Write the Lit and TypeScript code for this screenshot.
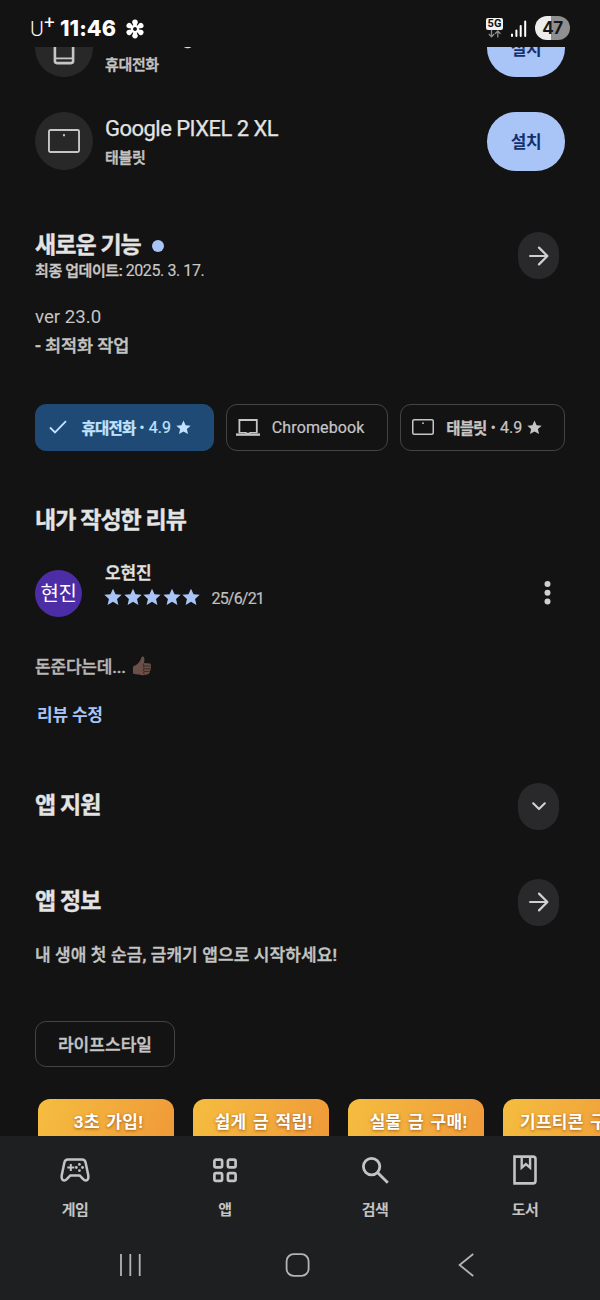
import { LitElement, html, css, svg } from "lit";
import { customElement } from "lit/decorators.js";

const STAR = "M10 0.8 L12.8 7 L19.6 7.6 L14.5 12.1 L16 18.8 L10 15.3 L4 18.8 L5.5 12.1 L0.4 7.6 L7.2 7 Z";

const star = (size: number) => html`<svg width=${size} height=${size} viewBox="0 0 20 20"><path d=${STAR} fill="currentColor" /></svg>`;

const tablet = (w: number, h: number, s: number) => html`<svg width=${w} height=${h} viewBox="0 0 ${w} ${h}">
  <rect x=${s / 2} y=${s / 2} width=${w - s} height=${h - s} rx="1.5" fill="none" stroke="currentColor" stroke-width=${s} />
  <circle cx=${w / 2} cy=${h * 0.26} r=${s * 0.6} fill="currentColor" />
</svg>`;

const arrow = html`<svg width="20" height="20" viewBox="0 0 20 20" fill="none" stroke="currentColor" stroke-width="2.2" stroke-linecap="round" stroke-linejoin="round">
  <path d="M1.1 10H18.2M10 1.6L18.4 10L10 18.4" />
</svg>`;

const chevron = html`<svg width="14" height="9" viewBox="0 0 14 9" fill="none" stroke="currentColor" stroke-width="2.1" stroke-linecap="round" stroke-linejoin="round">
  <path d="M1.2 1.3L7 7.1L12.8 1.3" />
</svg>`;

const petals = [0, 60, 120, 180, 240, 300];

@customElement("app-root")
export class AppRoot extends LitElement {
  static styles = css`
    :host {
      display: flex;
      flex-direction: column;
      width: 600px;
      height: 1300px;
      background: #131313;
      color: #e3e3e3;
      font-family: Roboto, "Noto Sans CJK KR", sans-serif;
      overflow: hidden;
    }
    svg { display: block; flex: none; }
    .status {
      flex: none;
      height: 46.5px;
      box-sizing: border-box;
      padding: 11px 30px 0 30px;
      display: flex;
      align-items: flex-start;
      color: #fff;
      white-space: nowrap;
    }
    .carrier { font-size: 21px; line-height: 36px; font-weight: 300; width: 14px; }
    .plus { font-size: 19px; line-height: 23px; font-weight: 400; width: 16px; }
    .clock { font: 800 21.5px/35px Inter, sans-serif; letter-spacing: 0.1px; margin-right: 9px; }
    .flower { margin-top: 8px; }
    .grow { flex: 1; }
    .net { width: 17px; margin: 7px 7px 0 0; }
    .g5 {
      height: 12px; border-radius: 2px; background: #f4f4f4; color: #111;
      font: 700 11px/12.5px Roboto, sans-serif; text-align: center; letter-spacing: 0.2px;
    }
    .signal { margin: 9px 8px 0 0; }
    .battery {
      width: 35px; height: 24px; margin-top: 5px; border-radius: 12px; color: #161616;
      background: linear-gradient(90deg, #ececec 0 46%, #8f8f8f 46%);
      font: 700 17px/24px Inter, sans-serif; text-align: center; letter-spacing: -0.5px;
    }
    .scroll { flex: 1; min-height: 0; overflow: hidden; }
    .page { margin-top: -28px; padding: 0 35px; display: flex; flex-direction: column; }
    .device { display: flex; height: 59px; margin-bottom: 34.5px; }
    .disc {
      width: 58px; height: 58px; border-radius: 50%; background: #282828; color: #c6c6c6;
      display: flex; align-items: center; justify-content: center; margin-right: 12px;
    }
    .dname { font-size: 22px; line-height: 28px; padding-top: 3px; letter-spacing: -0.53px; -webkit-text-stroke: 0.25px; }
    .dkind { font-size: 15px; line-height: 22px; padding-top: 4px; color: #c4c4c4; font-weight: 500; letter-spacing: -0.35px; -webkit-text-stroke: 0.45px; }
    .install {
      width: 78px; height: 58.5px; border-radius: 29px; background: #a9c5f7; color: #11306e;
      font-size: 17px; line-height: 60px; text-align: center; font-weight: 700; letter-spacing: -0.4px;
    }
    .sec { display: flex; align-items: center; height: 47px; padding-right: 6px; }
    h2 { margin: 0; font-size: 23px; line-height: 28px; font-weight: 700; letter-spacing: -0.95px; white-space: nowrap; -webkit-text-stroke: 0.35px; }
    .round {
      width: 41px; height: 47px; border-radius: 20.5px; background: #29292b; color: #d0d0d0;
      display: flex; align-items: center; justify-content: center;
    }
    .news { margin-top: 26.5px; }
    .titleline { display: flex; align-items: center; height: 26px; margin-top: 3px; }
    .dot { width: 12px; height: 12px; border-radius: 50%; background: #a9c5f7; margin-left: 11px; }
    .updated { font-size: 15px; line-height: 22px; padding-top: 1px; font-weight: 500; color: #c9c9c9; letter-spacing: -0.4px; white-space: nowrap; -webkit-text-stroke: 0.4px; }
    .updated span { font-size: 16px; font-weight: 400; -webkit-text-stroke: 0.15px; }
    .notes { margin-top: 25px; height: 56px; font-size: 18.7px; line-height: 27.5px; color: #c4c4c4; }
    .notes .ko { font-size: 17.5px; font-weight: 500; letter-spacing: -0.1px; padding-top: 1px; -webkit-text-stroke: 0.4px; }
    .chips { margin-top: 44px; display: flex; gap: 12px; height: 46.5px; }
    .chip {
      box-sizing: border-box; height: 46.5px; border: 1.5px solid #444; border-radius: 11px;
      display: flex; align-items: center; color: #c6c6c6; font-size: 16px; white-space: nowrap;
    }
    .chip b { font-size: 15.5px; font-weight: 700; letter-spacing: -0.8px; -webkit-text-stroke: 0.25px; }
    .chip i { font-style: normal; margin: 0 4px; }
    .chip .num { margin-right: 5px; -webkit-text-stroke: 0.2px; }
    .on { background: #1f4a75; border-color: #1f4a75; color: #c2e3ff; width: 179px; padding-left: 13px; }
    .cb { width: 162.5px; padding-left: 9.5px; }
    .cb .label { letter-spacing: 0.12px; -webkit-text-stroke: 0.2px; }
    .tb { width: 165px; padding-left: 11px; }
    .ico { width: 34px; }
    .on .ico { width: 32.5px; }
    .ico.wide { width: 35.5px; }
    .mine { margin-top: 56px; height: 28px; }
    .review { margin-top: 33px; display: flex; height: 51px; }
    .avatar {
      width: 47px; height: 47px; margin-top: 2px; border-radius: 50%; background: #4d2da5; color: #fff;
      text-align: center; font-size: 20px; line-height: 48px; letter-spacing: -0.5px; margin-right: 23px; font-weight: 400;
    }
    .who { font-size: 17px; line-height: 24px; margin-top: -7px; font-weight: 500; letter-spacing: -0.1px; color: #e3e3e3; -webkit-text-stroke: 0.45px; }
    .rate { display: flex; align-items: center; height: 24px; color: #a9c5f7; gap: 1.6px; margin-left: -1px; }
    .date { margin-left: 9.5px; font-size: 16px; color: #c0c0c0; letter-spacing: -0.8px; padding-top: 3px; -webkit-text-stroke: 0.2px; }
    .more { margin: 12.5px 13px 0 0; }
    .body { margin-top: 34px; height: 26px; display: flex; align-items: center; font-size: 17px; font-weight: 500; letter-spacing: -0.2px; color: #b8b8b8; }
    .body span { -webkit-text-stroke: 0.4px; }
    .body svg { margin-left: 6px; }
    .edit { margin: 23px 0 0 2px; height: 26px; line-height: 26px; font-size: 17px; font-weight: 700; letter-spacing: -0.2px; color: #a9c5f7; }
    .support { margin-top: 55px; }
    .about { margin-top: 49px; }
    .desc { margin-top: 16px; height: 26px; line-height: 26px; font-size: 17px; font-weight: 500; letter-spacing: 0.1px; color: #c4c4c4; white-space: nowrap; -webkit-text-stroke: 0.4px; }
    .tag { margin-top: 53px; width: 140px; justify-content: center; font-size: 17px; font-weight: 500; letter-spacing: 0.05px; flex: none; -webkit-text-stroke: 0.4px; }
    .cards { display: flex; gap: 19px; margin: 32px 0 0 3px; }
    .card {
      flex: none; width: 136px; height: 60px; border-radius: 12px;
      background: linear-gradient(110deg, #f5bd40, #ef9838); color: #fff;
      font-size: 17px; line-height: 46px; font-weight: 700; text-align: center; white-space: nowrap;
      text-shadow: 0 1px 3px rgba(120, 60, 0, 0.7); box-sizing: border-box;
      padding-left: 5px; letter-spacing: 0.3px; word-spacing: 2px;
    }
    .bottom { flex: none; height: 164px; background: #1e1f21; color: #c4c4c4; }
    .tabs { display: grid; grid-template-columns: repeat(4, 150px); height: 100px; padding-top: 16px; box-sizing: border-box; }
    .tab { display: flex; flex-direction: column; align-items: center; font-size: 15px; font-weight: 700; line-height: 22px; letter-spacing: -0.5px; }
    .tabicon { height: 36px; display: flex; align-items: center; margin-bottom: 11px; }
    .sys { display: flex; align-items: center; height: 57px; padding-left: 119px; color: #b4b4b4; }
    .home { margin-left: 143px; }
    .back { margin-left: 147.5px; }
  `;

  render() {
    return html`
      <div class="status">
        <span class="carrier">U</span><span class="plus">+</span>
        <span class="clock">11:46</span>
        <svg class="flower" width="20" height="20" viewBox="0 0 20 20">
          ${petals.map((a) => svg`<g transform="rotate(${a} 10 10)"><path d="M8.9 7.8L7.2 3.4A2.8 2.8 0 1 1 12.8 3.4L11.1 7.8Z" fill="#fff"/></g>`)}
          <circle cx="10" cy="10" r="3" fill="none" stroke="#fff" stroke-width="2" />
        </svg>
        <span class="grow"></span>
        <div class="net">
          <div class="g5">5G</div>
          <svg width="17" height="8" viewBox="0 0 17 8" fill="none" stroke="#8c8c8c" stroke-width="1.3">
            <path d="M5.5 0V6.6M2.8 4L5.5 6.8L8.2 4M11.8 7.5V1.2M9.1 3.8L11.8 1L14.5 3.8" />
          </svg>
        </div>
        <svg class="signal" width="17" height="17" viewBox="0 0 17 17" stroke="#fff" stroke-width="2" stroke-linecap="round">
          <path d="M2 14.5V16M6.4 10.5V16M10.7 6V16M15.2 1.5V16" />
        </svg>
        <div class="battery">47</div>
      </div>

      <div class="scroll"><div class="page">
        <div class="device">
          <div class="disc"><svg width="22" height="34" viewBox="0 0 22 34" fill="none" stroke="currentColor" stroke-width="2.6">
            <rect x="1.9" y="1.5" width="18.2" height="30.6" rx="2" /><path d="M2 27.4H20" stroke-width="1.8" /></svg></div>
          <div><div class="dname">Samsung</div><div class="dkind">휴대전화</div></div>
          <span class="grow"></span><div class="install">설치</div>
        </div>
        <div class="device">
          <div class="disc">${tablet(32, 24, 1.9)}</div>
          <div><div class="dname">Google PIXEL 2 XL</div><div class="dkind">태블릿</div></div>
          <span class="grow"></span><div class="install">설치</div>
        </div>

        <div class="sec news">
          <div>
            <div class="titleline"><h2>새로운 기능</h2><span class="dot"></span></div>
            <div class="updated">최종 업데이트: <span>2025. 3. 17.</span></div>
          </div>
          <span class="grow"></span><div class="round">${arrow}</div>
        </div>
        <div class="notes"><div>ver 23.0</div><div class="ko">- 최적화 작업</div></div>

        <div class="chips">
          <div class="chip on">
            <span class="ico"><svg width="18" height="14" viewBox="0 0 18 14" fill="none" stroke="currentColor" stroke-width="1.8"><path d="M1 7.5L6 12.4L17 1.2" /></svg></span>
            <b>휴대전화</b><i>•</i><span class="num">4.9</span>${star(15)}
          </div>
          <div class="chip cb">
            <span class="ico wide"><svg width="24" height="17" viewBox="0 0 24 17" fill="none" stroke="currentColor" stroke-width="1.8"><path d="M3.4 14V1H20.8V14" /><path d="M0 15.6H24" stroke-width="2.4" /><path d="M3 13.6H10V14.4H14V13.6H21" stroke-width="1.2" /></svg></span>
            <span class="label">Chromebook</span>
          </div>
          <div class="chip tb">
            <span class="ico">${tablet(22, 16, 1.5)}</span>
            <b>태블릿</b><i>•</i><span class="num">4.9</span>${star(15)}
          </div>
        </div>

        <h2 class="mine">내가 작성한 리뷰</h2>
        <div class="review">
          <div class="avatar">현진</div>
          <div>
            <div class="who">오현진</div>
            <div class="rate">${[1, 2, 3, 4, 5].map(() => star(18))}<span class="date">25/6/21</span></div>
          </div>
          <span class="grow"></span>
          <svg class="more" width="10" height="26" viewBox="0 0 10 26" fill="#cfcfcf"><circle cx="5.5" cy="4" r="3" /><circle cx="5.5" cy="12.8" r="3" /><circle cx="5.5" cy="21.6" r="3" /></svg>
        </div>
        <div class="body"><span>돈준다는데...</span>
          <svg width="20" height="20" viewBox="0 0 20 20">
            <path d="M1 10.5Q4 9.5 6.5 7Q8.8 4.5 9.4 1.6Q10 0 11.6 0.8Q13 2 12 7L18 7.4Q19.6 8 18.8 10Q19.6 11 18.6 12.6Q19 14 18 15.2Q18 17 16.6 18Q11 20 7 18.6Q3.5 18.6 1 17.5Z" fill="#6a5048" />
            <path d="M12 10H18.5M12 12.8H18.4M12 15.4H17.8M11.5 7.5Q10.4 10 12.2 10Q10.6 11.5 12 12.8Q10.6 14 12 15.4Q11 17 12.4 18.4" fill="none" stroke="#3a2821" stroke-width="0.9" />
          </svg>
        </div>
        <div class="edit">리뷰 수정</div>

        <div class="sec support"><h2>앱 지원</h2><span class="grow"></span><div class="round">${chevron}</div></div>
        <div class="sec about"><h2>앱 정보</h2><span class="grow"></span><div class="round">${arrow}</div></div>
        <div class="desc">내 생애 첫 순금, 금캐기 앱으로 시작하세요!</div>
        <div class="chip tag">라이프스타일</div>

        <div class="cards">
          <div class="card">3초 가입!</div>
          <div class="card">쉽게 금 적립!</div>
          <div class="card">실물 금 구매!</div>
          <div class="card">기프티콘 구매!</div>
        </div>
      </div></div>

      <div class="bottom">
        <div class="tabs">
          <div class="tab"><span class="tabicon"><svg width="30" height="24" viewBox="0 0 30 24" fill="none" stroke="currentColor" stroke-width="2.5" stroke-linejoin="round">
            <path d="M8 1.6H22Q25 1.6 25.6 4.5L28.3 17.5Q28.8 22.4 25.8 22.4Q24.4 22.4 23.2 21.2L19.6 17.4H10.4L6.8 21.2Q5.6 22.4 4.2 22.4Q1.2 22.4 1.7 17.5L4.4 4.5Q5 1.6 8 1.6Z" />
            <path d="M10.8 6V13M7.3 9.5H14.3" stroke-width="2" />
            <g fill="currentColor" stroke="none"><circle cx="19.4" cy="6.4" r="1.4" /><circle cx="19.4" cy="12.6" r="1.4" /><circle cx="16.3" cy="9.5" r="1.4" /><circle cx="22.5" cy="9.5" r="1.4" /></g>
          </svg></span>게임</div>
          <div class="tab"><span class="tabicon"><svg width="26" height="26" viewBox="0 0 26 26" fill="none" stroke="currentColor" stroke-width="2.7">
            <rect x="2.4" y="2.7" width="7.7" height="7.7" rx="1.6" /><rect x="15.9" y="2.7" width="7.7" height="7.7" rx="1.6" /><rect x="2.4" y="16.2" width="7.7" height="7.7" rx="1.6" /><rect x="15.9" y="16.2" width="7.7" height="7.7" rx="1.6" />
          </svg></span>앱</div>
          <div class="tab"><span class="tabicon"><svg width="28" height="28" viewBox="0 0 28 28" fill="none" stroke="currentColor" stroke-width="2.8">
            <circle cx="10.6" cy="10.6" r="8.2" /><path d="M16.5 16.5L26.8 26.8" />
          </svg></span>검색</div>
          <div class="tab"><span class="tabicon"><svg width="24" height="30" viewBox="0 0 24 30" fill="none" stroke="currentColor" stroke-width="2.6">
            <path d="M1.5 1.6H20Q22.5 1.6 22.5 4V26Q22.5 28.4 20 28.4H1.5Z" /><path d="M8.7 1.6V12.6L12.9 9L17.1 12.6V1.6" stroke-width="2.4" />
          </svg></span>도서</div>
        </div>
        <div class="sys">
          <svg width="23" height="24" viewBox="0 0 23 24" stroke="currentColor" stroke-width="1.8"><path d="M2 1V23M11.3 1V23M20.7 1V23" /></svg>
          <svg class="home" width="25" height="24" viewBox="0 0 25 24" fill="none" stroke="currentColor" stroke-width="1.8"><rect x="1.6" y="1.2" width="22" height="21.6" rx="7" /></svg>
          <svg class="back" width="16" height="24" viewBox="0 0 16 24" fill="none" stroke="currentColor" stroke-width="1.8"><path d="M15.2 1L1.6 12L15.2 23" /></svg>
        </div>
      </div>
    `;
  }
}
